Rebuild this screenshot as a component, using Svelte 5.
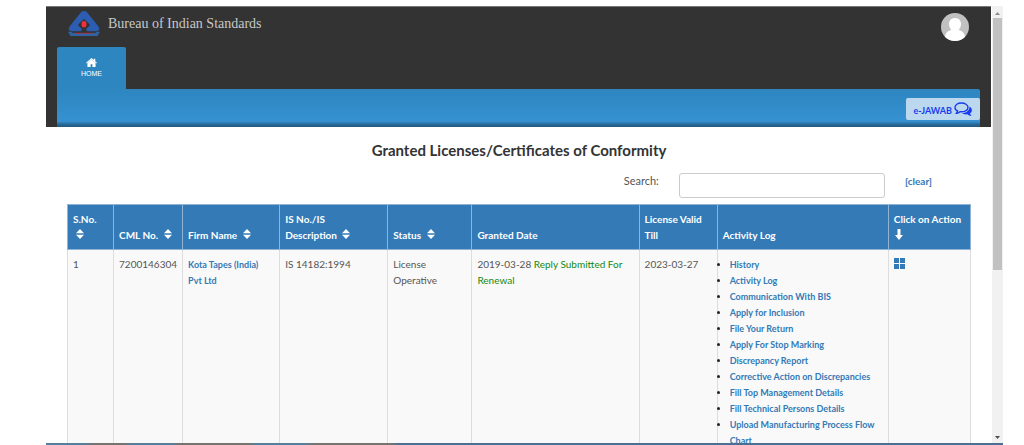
<script>
  const columns = [
    { label: 'S.No.', width: 46, sort: true },
    { label: 'CML No.', width: 69, sort: true },
    { label: 'Firm Name', width: 97, sort: true },
    { label: 'IS No./IS\nDescription', width: 108, sort: true },
    { label: 'Status', width: 84, sort: true },
    { label: 'Granted Date', width: 167 },
    { label: 'License Valid Till', width: 78 },
    { label: 'Activity Log', width: 171 },
    { label: 'Click on Action', width: 82, arrow: true }
  ];
  const total = columns.reduce((sum, c) => sum + c.width, 0);
  const firm = 'Kota Tapes (India)\nPvt Ltd';
  const activities = [
    'History',
    'Activity Log',
    'Communication With BIS',
    'Apply for Inclusion',
    'File Your Return',
    'Apply For Stop Marking',
    'Discrepancy Report',
    'Corrective Action on Discrepancies',
    'Fill Top Management Details',
    'Fill Technical Persons Details',
    'Upload Manufacturing Process Flow Chart'
  ];
  let query = $state('');
</script>

<div class="window">
  <div class="view">
    <div class="page">
      <header>
        <div class="brand">
          <svg class="logo" viewBox="0 0 32 26" aria-hidden="true">
            <path d="M16 0q2 0 3.200 1.400L30.500 15.500q1.400 2 .3 3.500-.8 1.200-2.400 1.200H19l-1-2.200 3.500-3.200q.5-1-.2-1.800L16 8l-5.300 5q-.7.800-.2 1.800L14 18l-1 2.200H3.600q-1.600 0-2.400-1.200-1.100-1.500.3-3.500L12.800 1.400Q14 0 16 0z" fill="#2c5db0" />
            <ellipse cx="16" cy="13.300" rx="2.500" ry="3.300" fill="#f0303a" />
            <path d="M0 20.800h3l2 1.300h22l2-1.300h3L29.500 25h-27z" fill="#2f64a4" />
            <path d="M7 22.400h18" stroke="#a83240" stroke-width="1.400" stroke-dasharray="2 .6" />
          </svg>
          <span class="name">Bureau of Indian Standards</span>
          <svg class="avatar" viewBox="0 0 28 28" role="img" aria-label="User profile">
            <defs><clipPath id="disc"><circle cx="14" cy="14" r="14" /></clipPath></defs>
            <g clip-path="url(#disc)">
              <path d="M0 0h28v28H0z" fill="#c1c1c1" />
              <path d="M14 5c4 0 6 2.800 6 6 0 2.700-1 4.500-2.500 6 4 .8 6 3 7 8v4h-21v-4c1-5 3-7.200 7-8C9 15.500 8 13.700 8 11c0-3.200 2-6 6-6z" fill="#fff" />
            </g>
          </svg>
        </div>
        <nav>
          <a class="tab" href="#home">
            <svg viewBox="0 0 12 10" aria-hidden="true">
              <path d="M6 0 0 5.200l.7.900L6 1.800l5.300 4.300.7-.9-1.800-1.600V.8H8.500v1.400z" fill="#fff" />
              <path d="M6 1.600 1.500 5.500V10h3.500V7h2v3h3.500V5.500z" fill="#fff" />
            </svg>
            HOME
          </a>
        </nav>
        <div class="band">
          <a class="jawab" href="#jawab">
            <span>e-JAWAB</span>
            <svg viewBox="0 0 18 15" aria-hidden="true">
              <path d="M15.500 4.500c3 2 3.200 5 .6 6.800.2 1.200.9 1.800 1.500 2.500-1.900.1-3.200-.5-4.200-1.500-2.200.3-4.300 0-5.900-1 4.700-.3 8.300-3 8-6.800z" fill="#1a3cf0" />
              <path d="M7.300 1C3.700 1 1 2.900 1 5.400c0 1.600 1 2.900 2.600 3.600-.1 1-.5 1.500-1.100 2.200 1.500 0 2.700-.7 3.500-1.500 4.400.5 8-1.500 8-4.300C14 2.900 11 1 7.300 1z" fill="#bcd8ee" stroke="#1a3cf0" stroke-width="1.400" />
            </svg>
          </a>
        </div>
      </header>

      <main>
        <h1>Granted Licenses/Certificates of Conformity</h1>
        <div class="search">
          <label for="search">Search:</label>
          <input id="search" type="text" bind:value={query} />
          <button type="button" onclick={() => (query = '')}>[clear]</button>
        </div>
        <table>
          <colgroup>
            {#each columns as c}
              <col style:width="{(c.width / total) * 100}%" />
            {/each}
          </colgroup>
          <thead>
            <tr>
              {#each columns as c}
                <th scope="col">
                  <span class="label">{c.label}</span>
                  {#if c.sort}
                    <svg class="sort" viewBox="0 0 8 10" aria-hidden="true"><path d="M4 0l4 4.300H0zM4 10l4-4.300H0z" fill="#fff" /></svg>
                  {:else if c.arrow}
                    <svg class="down" viewBox="0 0 8 11" aria-hidden="true"><path d="M2.500 0h3v6H8l-4 5-4-5h2.500z" fill="#fff" /></svg>
                  {/if}
                </th>
              {/each}
            </tr>
          </thead>
          <tbody>
            <tr>
              <td>1</td>
              <td>7200146304</td>
              <td class="links"><a class="label" href="#firm">{firm}</a></td>
              <td>IS 14182:1994</td>
              <td>License Operative</td>
              <td>2019-03-28 <span class="note">Reply Submitted For Renewal</span></td>
              <td>2023-03-27</td>
              <td class="links">
                <ul>
                  {#each activities as a}
                    <li><a href="#activity">{a}</a></li>
                  {/each}
                </ul>
              </td>
              <td>
                <button type="button" class="action" aria-label="Open actions">
                  <svg viewBox="0 0 11 11" aria-hidden="true"><path d="M0 0h5v5H0zM6 0h5v5H6zM0 6h5v5H0zM6 6h5v5H6z" fill="#337ab7" /></svg>
                </button>
              </td>
            </tr>
          </tbody>
        </table>
      </main>
    </div>
    <div class="scroll" aria-hidden="true">
      <svg viewBox="0 0 5 3"><path d="M2.500 0 5 3H0z" fill="#8b8b8b" /></svg>
      <div class="thumb"></div>
      <svg viewBox="0 0 5 3"><path d="M0 0h5L2.500 3z" fill="#505050" /></svg>
    </div>
  </div>
  <div class="taskbar"></div>
</div>

<style>
  :global(body) {
    margin: 0;
    background: #fff;
  }
  .window {
    box-sizing: border-box;
    height: 100vh;
    padding: 6px 21px 0 46px;
    display: flex;
    flex-direction: column;
    font-family: Lato, sans-serif;
    font-size: 10px;
    line-height: 16px;
    color: #555;
  }
  .view {
    flex: 1;
    min-height: 0;
    display: flex;
  }
  .page {
    flex: 1;
    min-width: 0;
    overflow: hidden;
  }
  header {
    background: #333;
    padding: 0 11px;
    border-top: 1px solid #777;
  }
  .brand {
    display: flex;
    align-items: center;
    height: 40px;
    padding: 0 11px;
    box-sizing: border-box;
  }
  .logo {
    width: 32px;
    height: 26px;
    margin-bottom: 6px;
  }
  .name {
    margin: 0 auto 6px 8px;
    font: 14px/16px 'Liberation Serif', serif;
    color: #c8c8c8;
  }
  .avatar {
    width: 28px;
    height: 28px;
  }
  .tab {
    display: flex;
    flex-direction: column;
    align-items: center;
    box-sizing: border-box;
    width: 69px;
    height: 42px;
    padding-top: 11px;
    border-radius: 2px 2px 0 0;
    background: #2d86bf;
    color: #fff;
    font: 7px/14px 'Liberation Sans', sans-serif;
    text-decoration: none;
  }
  .tab svg {
    width: 11px;
    height: 9px;
  }
  .band {
    display: flex;
    justify-content: flex-end;
    align-items: flex-start;
    box-sizing: border-box;
    height: 38px;
    padding-top: 9px;
    border-radius: 0 2px 0 0;
    background: linear-gradient(#2d86bf, #3691d1 85%, #276593 94%, #245a83);
  }
  .jawab {
    display: flex;
    align-items: center;
    gap: 2px;
    box-sizing: border-box;
    height: 22px;
    padding: 0 8px;
    border-radius: 2px;
    background: #bcd8ee;
    color: #1a3cf0;
    font-size: 9px;
    font-weight: 700;
    text-decoration: none;
  }
  .jawab span {
    padding-top: 4px;
  }
  .jawab svg {
    width: 18px;
    height: 15px;
  }
  main {
    padding: 13px 20px 0 21px;
  }
  h1 {
    margin: 0;
    font-size: 15px;
    line-height: 20px;
    font-weight: 700;
    text-align: center;
    color: #333;
  }
  .search {
    display: flex;
    align-items: flex-start;
    justify-content: flex-end;
    padding: 13px 39px 6px 0;
    font-size: 11px;
  }
  .search input {
    box-sizing: border-box;
    width: 206px;
    height: 25px;
    margin: 0 20px;
    padding: 0 6px;
    border: 1px solid #ccc;
    border-radius: 3px;
    font: inherit;
    color: inherit;
  }
  .search button {
    padding: 0;
    border: 0;
    background: none;
    font: inherit;
    font-size: 10px;
    font-weight: 700;
    color: #337ab7;
  }
  table {
    width: 100%;
    table-layout: fixed;
    border-collapse: collapse;
  }
  th,
  td {
    border: 1px solid #ddd;
    padding: 6px 4px 6px 5px;
    text-align: left;
  }
  th {
    background: #337ab7;
    border-color: #8fb4d5;
    color: #fff;
    vertical-align: bottom;
  }
  td {
    background: #f9f9f9;
    vertical-align: top;
  }
  .label {
    white-space: pre-line;
  }
  .sort {
    width: 8px;
    height: 10px;
    margin: 0 3px;
  }
  .down {
    width: 8px;
    height: 11px;
    margin: 0 1px 3px;
    vertical-align: bottom;
  }
  .links {
    padding-top: 7px;
    font-size: 9px;
    font-weight: 700;
  }
  td a {
    color: #337ab7;
    text-decoration: none;
  }
  .note {
    color: #118a11;
  }
  ul {
    margin: 0;
    padding-left: 7px;
    color: #222;
  }
  .action {
    display: block;
    padding: 2px 0 0;
    border: 0;
    background: none;
  }
  .action svg {
    display: block;
    width: 11px;
    height: 11px;
  }
  .scroll {
    display: flex;
    flex-direction: column;
    align-items: center;
    box-sizing: border-box;
    width: 11px;
    margin-left: 1px;
    padding: 6px 0 4px;
    background: #f1f1f1;
  }
  .scroll svg {
    width: 5px;
    height: 3px;
  }
  .thumb {
    width: 9px;
    height: 59%;
    margin: 3px 0 auto;
    background: #c1c1c1;
  }
  .taskbar {
    height: 2px;
    background: linear-gradient(90deg, #55809c 4%, #77736f 5% 8%, #55809c 9% 13%, #77736f 14% 21%, #55809c 22% 27%, #77736f 28% 36%, #4a6f93 37%);
  }
</style>
